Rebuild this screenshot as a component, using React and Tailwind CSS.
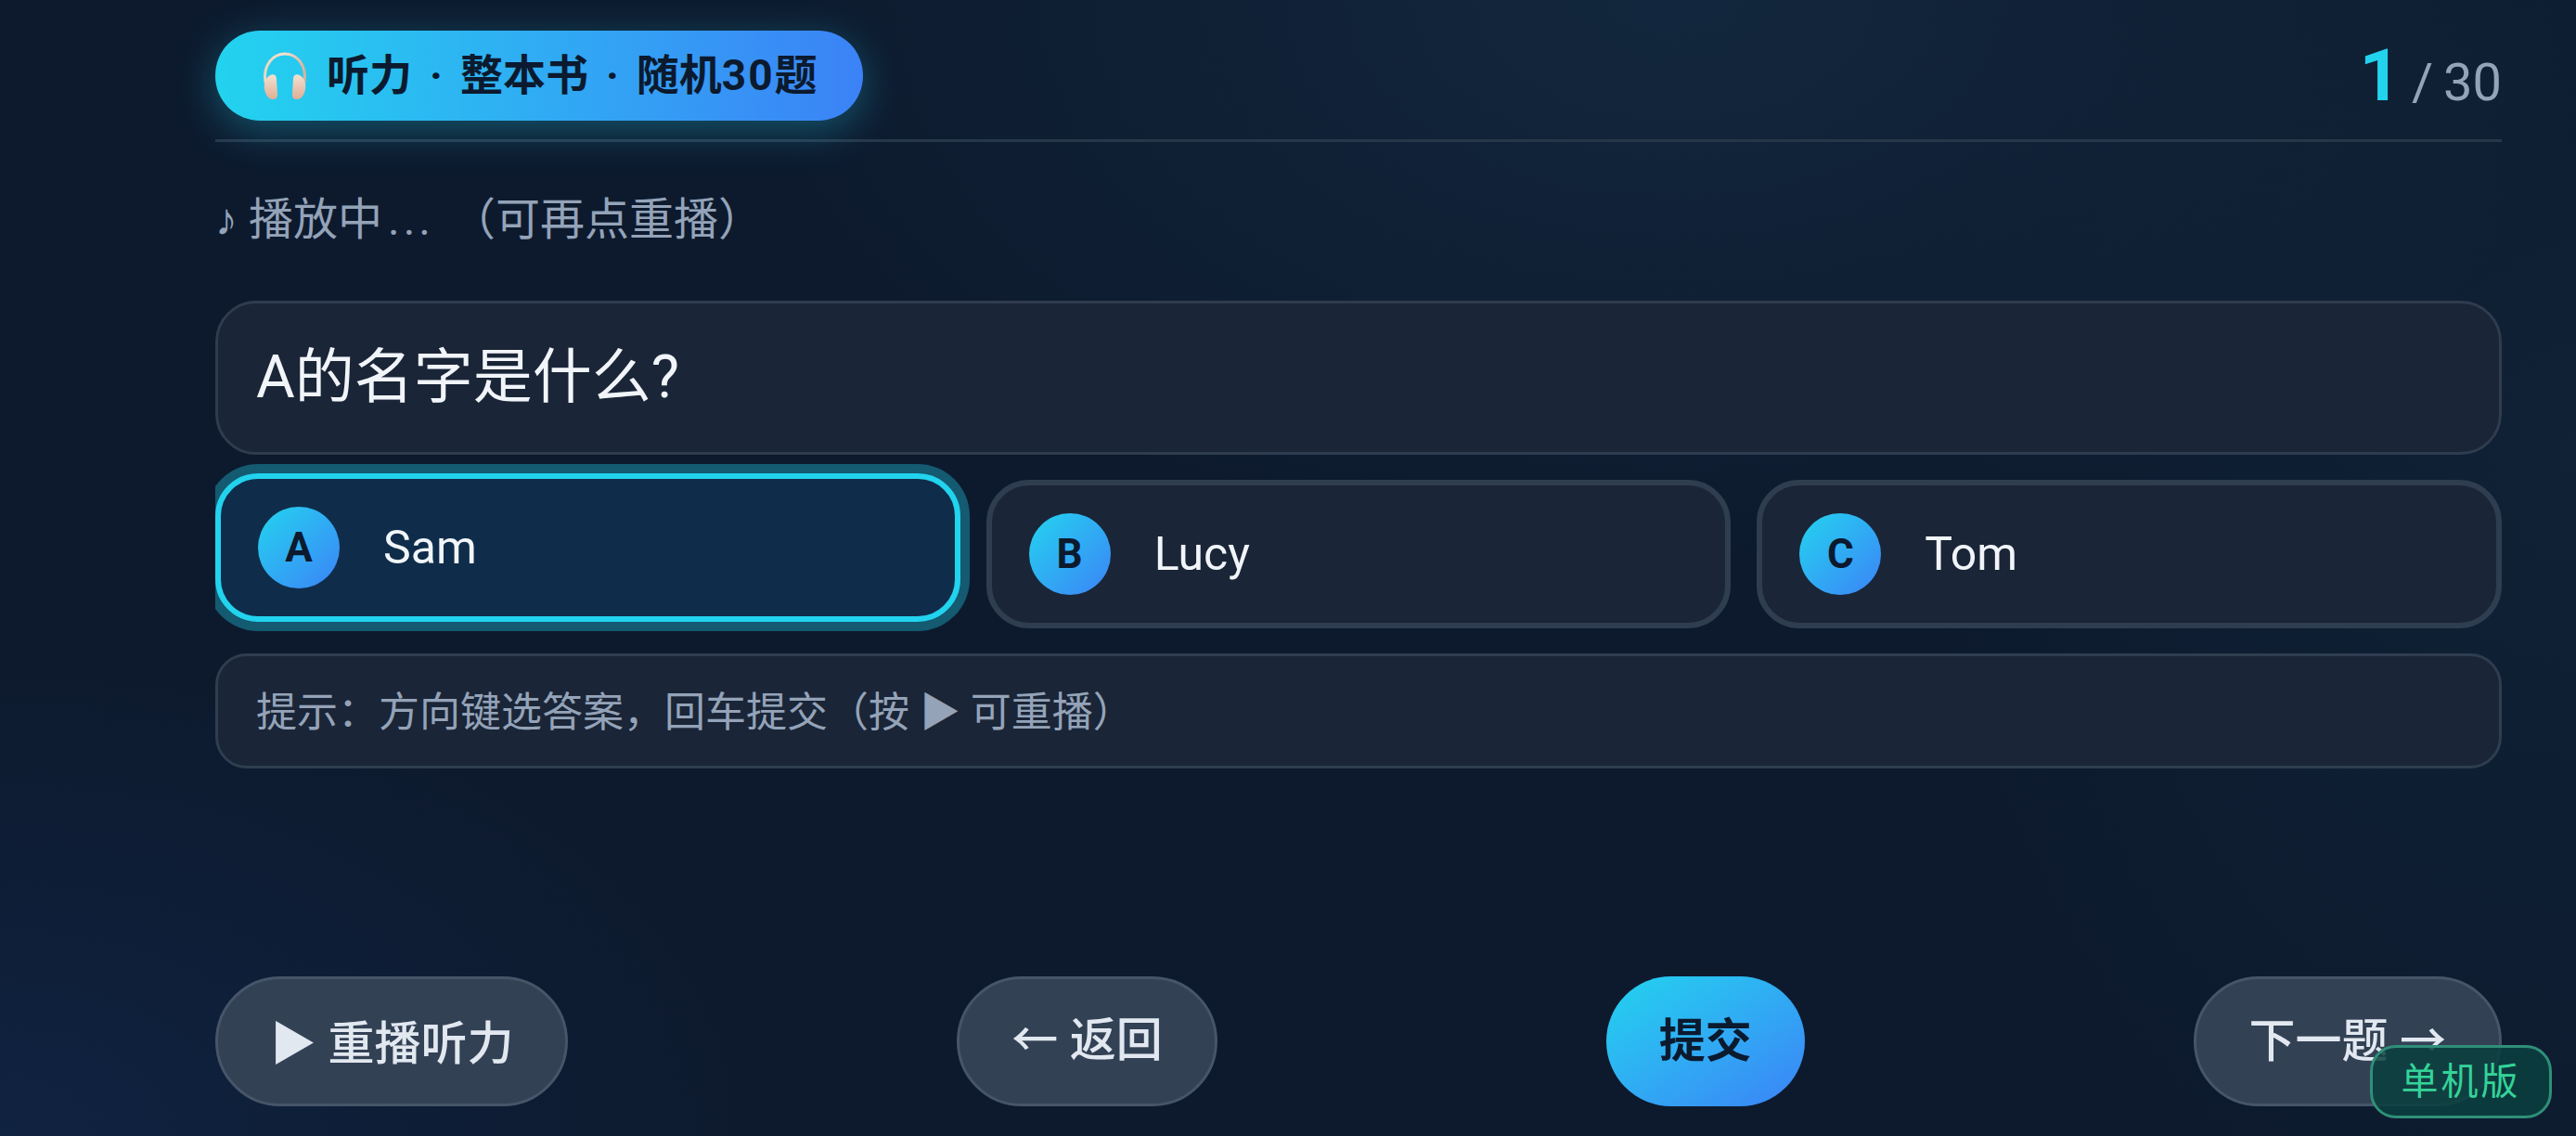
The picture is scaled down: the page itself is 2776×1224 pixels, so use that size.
function Headphones() {
  return (
    <svg viewBox="0 0 50 52" className="h-[52px] w-[50px] shrink-0">
      <defs>
        <linearGradient id="band" x1="0" y1="0" x2="1" y2="0">
          <stop offset="0" stopColor="#e9d8bf" />
          <stop offset="0.5" stopColor="#f4e2cf" />
          <stop offset="1" stopColor="#d8b49c" />
        </linearGradient>
        <linearGradient id="cup" x1="0" y1="0" x2="0" y2="1">
          <stop offset="0" stopColor="#f2e2d2" />
          <stop offset="1" stopColor="#dfae94" />
        </linearGradient>
      </defs>
      <path d="M4 33 C1 13 13 2 25 2 C37 2 49 13 46 33" fill="none" stroke="url(#band)" strokeWidth="3" />
      <path d="M9 25 C4 28 2 34 3 40 C4 46 7 51 12 51 C16 51 17 49 17 45 L16 29 C16 25 13 23 9 25 Z" fill="url(#cup)" />
      <path d="M41 25 C46 28 48 34 47 40 C46 46 43 51 38 51 C34 51 33 49 33 45 L34 29 C34 25 37 23 41 25 Z" fill="url(#cup)" />
    </svg>
  );
}

function Option({ letter, text, selected }) {
  return (
    <div
      className={
        selected
          ? "flex h-[160px] -translate-y-[7px] items-center gap-[47px] rounded-[46px] border-[6px] border-[#22d3ee] bg-[#0f2d4a] pl-[40px] shadow-[0_0_0_10px_rgba(34,211,238,0.35)]"
          : "flex h-[160px] items-center gap-[47px] rounded-[46px] border-[6px] border-[#2f3d50] bg-[#1a2537] pl-[40px]"
      }
    >
      <span className="flex h-[88px] w-[88px] items-center justify-center rounded-full bg-gradient-to-br from-[#22d3ee] to-[#3b82f6] text-[44px] font-bold text-[#0b1a2e]">
        {letter}
      </span>
      <span className="text-[50px] text-[#f1f5f9]">{text}</span>
    </div>
  );
}

const ghost =
  "flex h-[140px] items-center justify-center rounded-[70px] border-[3px] border-[#475569] bg-[#334155] text-[50px] font-medium text-[#e2e8f0]";

export default function App() {
  return (
    <main
      className="relative flex h-screen w-full flex-col overflow-hidden bg-[#0d1a2e] pt-[33px] pr-[80px] pb-[32px] pl-[232px] bg-[radial-gradient(1000px_600px_at_65%_0%,rgba(26,58,84,0.4),transparent),radial-gradient(800px_500px_at_0%_100%,rgba(20,50,100,0.35),transparent),radial-gradient(700px_900px_at_100%_40%,rgba(20,45,65,0.4),transparent)]"
      style={{ fontFamily: 'Roboto, "Noto Sans CJK SC", sans-serif' }}
    >
      <header className="flex items-center justify-between border-b-[3px] border-[#27374a] pb-[20px]">
        <div className="flex h-[97px] w-[698px] items-center gap-[20px] rounded-[48px] bg-gradient-to-r from-[#22d3ee] to-[#3b82f6] pl-[50px] text-[46px] font-bold text-[#0b1a2e] shadow-[0_10px_44px_rgba(34,211,238,0.32)]">
          <Headphones />
          <span>
            听力<span className="mx-[19px]">·</span>整本书<span className="mx-[19px]">·</span>随机<span className="tracking-[2px]">30</span>题
          </span>
        </div>
        <div className="text-[56px] leading-none text-[#94a3b8]">
          <span className="text-[78px] font-bold text-[#22d3ee]">1</span> <span className="-ml-[2px]">/<span className="-ml-[3px]"> 30</span></span>
        </div>
      </header>

      <p className="mt-[49px] text-[48px] leading-[70px] text-[#94a3b8]">
        <span className="mr-[12px] font-['Liberation_Sans']">♪</span>播放中<span className="mr-[18px] ml-[6px] tracking-[4px]">...</span>（可再点重播）
      </p>

      <section className="mt-[52px] flex flex-col gap-[27px]">
        <div className="flex h-[166px] items-center rounded-[44px] border-[3px] border-[#2f3b4e] bg-[#1a2537] pl-[41px] text-[64px] text-[#f1f5f9]">
          A的名字是什么?
        </div>
        <div className="grid grid-cols-3 gap-[28px] overflow-x-clip">
          <Option letter="A" text="Sam" selected />
          <Option letter="B" text="Lucy" />
          <Option letter="C" text="Tom" />
        </div>
        <div className="flex h-[124px] items-center rounded-[34px] border-[3px] border-[#2f3d50] bg-[#1a2537] pt-[3px] pl-[41px] text-[44px] text-[#94a3b8]">
          提示：方向键选答案，回车提交（按 ▶ 可重播）
        </div>
      </section>

      <footer className="mt-auto flex items-center justify-between">
        <button className={`${ghost} px-[56px]`}>
          <span className="pt-[6px]">▶ 重播听力</span>
        </button>
        <button className={`${ghost} px-[56px]`}>
          <span className="pb-[2px]">← 返回</span>
        </button>
        <button className="flex h-[140px] items-center justify-center rounded-[70px] bg-gradient-to-br from-[#22d3ee] to-[#3b82f6] px-[57px] text-[50px] font-bold text-[#0b1a2e]">
          提交
        </button>
        <button className={`${ghost} px-[57px]`}>下一题 →</button>
      </footer>

      <div className="absolute right-[26px] bottom-[19px] flex h-[79px] w-[196px] items-center justify-center rounded-[28px] border-[3px] border-[#2f8f78] bg-[#0b3f3f]/85 text-[40px] tracking-[3px] text-[#34d399]">
        单机版
      </div>
    </main>
  );
}
